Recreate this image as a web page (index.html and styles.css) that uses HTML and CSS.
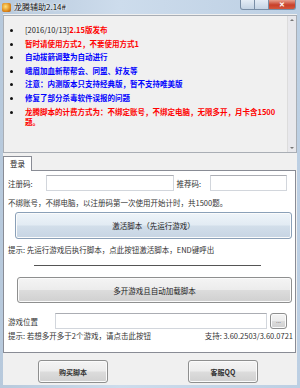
FILE: index.html
```html
<!DOCTYPE html>
<html lang="zh">
<head>
    <meta charset="UTF-8">
    <title>龙腾辅助2.14#</title>
    <link rel="stylesheet" href="styles.css">
</head>
<body>
<div id="window">
    <div id="titlebar">
        <span class="app-icon"></span>
        <span class="title">龙腾辅助2.14#</span>
        <div class="caption">
            <span class="cap-btn min"></span>
            <span class="cap-btn max"></span>
            <span class="cap-btn close">✕</span>
        </div>
    </div>
    <div id="client">
        <div id="news">
            <ul class="news-list">
                <li><span class="plain">[2016/10/13]</span><span class="red">2.15版发布</span></li>
                <li class="red">暂时请使用方式2，不要使用方式1</li>
                <li class="blue">自动拔箭调整为自动进行</li>
                <li class="blue">峨眉加血新帮帮会、同盟、好友等</li>
                <li class="blue">注意：内测版本只支持经典版，暂不支持唯美版</li>
                <li class="blue">修复了部分杀毒软件误报的问题</li>
                <li class="red">龙腾脚本的计费方式为：不绑定账号，不绑定电脑，无限多开，月卡含1500题。</li>
            </ul>
            <div class="scrollbar">
                <span class="arrow up"></span>
                <span class="arrow down"></span>
            </div>
        </div>

        <div id="tabs">
            <span class="tab selected">登录</span>
        </div>
        <div id="panel">
            <div class="row row-code">
                <label class="lbl">注册码:</label>
                <span class="input code"></span>
                <label class="lbl lbl-ref">推荐码:</label>
                <span class="input ref"></span>
            </div>
            <p class="note">不绑账号，不绑电脑，以注册码第一次使用开始计时，共1500题。</p>
            <button class="btn big activate">激活脚本（先运行游戏）</button>
            <p class="hint">提示: 先运行游戏后执行脚本，点此按钮激活脚本，END键呼出</p>
            <div class="sep"></div>
            <button class="btn big multi">多开游戏且自动加载脚本</button>
            <div class="row row-path">
                <label class="lbl">游戏位置</label>
                <span class="input path"></span>
                <button class="btn browse">...</button>
            </div>
            <div class="hint2">
                <span>提示: 若想多开多于2个游戏，请点击此按钮</span>
                <span>支持: 3.60.2503/3.60.0721</span>
            </div>
        </div>

        <div id="footer">
            <button class="btn foot">购买脚本</button>
            <button class="btn foot">客服QQ</button>
        </div>
    </div>
</div>
</body>
</html>
```

FILE: styles.css
```css
*{
    margin: 0;
    padding: 0;
    box-sizing: border-box;
}
ul{
    list-style: none;
}
body{
    width: 300px;
    height: 388px;
    overflow: hidden;
    font-family: "Noto Sans CJK SC", "Noto Sans", sans-serif;
    font-size: 7.5px;
    color: #222;
}

#window{
    width: 300px;
    height: 388px;
    background: linear-gradient(90deg, #b7c9dc, #cddcec 40%, #bccfe3);
    padding: 0 3px 3px;
    display: flex;
    flex-direction: column;
}

#titlebar{
    height: 14px;
    display: flex;
    align-items: center;
    position: relative;
}
.app-icon{
    width: 9px;
    height: 9px;
    margin: 0 3px 0 -1px;
    border-radius: 2px;
    background: radial-gradient(circle at 40% 40%, #ffe27a, #e08a1a 60%, #a4501a);
}
.title{
    font-size: 8px;
    color: #111;
    text-shadow: 0 0 3px #fff, 0 0 2px #fff;
    line-height: 14px;
}
.caption{
    position: absolute;
    right: 1px;
    top: 0;
    display: flex;
}
.cap-btn{
    height: 10px;
    border: 1px solid #7a8ea6;
    border-top: none;
    background: linear-gradient(#e4ecf5, #c4d3e4);
}
.cap-btn.min{
    width: 15px;
    border-radius: 0 0 0 3px;
}
.cap-btn.max{
    width: 14px;
    border-left: none;
}
.cap-btn.close{
    width: 27px;
    border-left: none;
    border-radius: 0 0 3px 0;
    background: linear-gradient(#e7a08f, #c8402a 55%, #d4563c);
    color: #fff;
    font-size: 7px;
    line-height: 9px;
    text-align: center;
    font-weight: bold;
}

#client{
    flex: 1;
    background: #f0f0f0;
    display: flex;
    flex-direction: column;
    padding-top: 1px;
}

#news{
    height: 138px;
    border: 1px solid #a9aeb5;
    display: flex;
    background: #f0f0f0;
}
.news-list{
    flex: 1;
    padding: 9px 6px 0 21px;
    font-weight: bold;
}
.news-list li{
    line-height: 10px;
    margin-bottom: 3.6px;
    position: relative;
}
.news-list li:before{
    content: "";
    position: absolute;
    left: -15px;
    top: 4px;
    width: 3px;
    height: 3px;
    border-radius: 50%;
    background: #111;
}
.plain{
    font-weight: normal;
    color: #222;
}
.red{
    color: #ff0000;
}
.blue{
    color: #0000ff;
}
.scrollbar{
    width: 9px;
    background: #e8e8ec;
    border-left: 1px solid #dcdcdc;
    display: flex;
    flex-direction: column;
    justify-content: space-between;
    padding: 3px 0;
}
.arrow{
    width: 0;
    height: 0;
    margin: 0 auto;
    border-left: 2px solid transparent;
    border-right: 2px solid transparent;
}
.arrow.up{
    border-bottom: 2px solid #777;
}
.arrow.down{
    border-top: 2px solid #777;
}

#tabs{
    height: 16px;
    margin-top: 1px;
    display: flex;
    align-items: flex-end;
}
.tab{
    width: 29px;
    height: 15px;
    border: 1px solid #898c95;
    border-bottom: none;
    background: #fff;
    text-align: center;
    line-height: 14px;
    position: relative;
    top: 1px;
}

#panel{
    height: 183px;
    margin-right: 1px;
    background: #fff;
    border: 1px solid #898c95;
    padding: 4px 8px 0 4px;
    display: flex;
    flex-direction: column;
}
.row{
    height: 16px;
    display: flex;
    align-items: center;
    white-space: nowrap;
}
.row > *{
    flex-shrink: 0;
}
.lbl{
    color: #333;
}
.input{
    height: 16px;
    background: #fff;
    border: 1px solid #d2d6dc;
    border-top-color: #abadb3;
}
.input.code{
    width: 128px;
    margin-left: 13px;
}
.lbl-ref{
    margin-left: 3px;
}
.input.ref{
    width: 77px;
    margin-left: 9px;
}
.note{
    margin-top: 7px;
    line-height: 10px;
    color: #333;
    white-space: nowrap;
}
.btn{
    font-family: "Noto Sans CJK SC", "Noto Sans", sans-serif;
    font-size: 7.5px;
    color: #222;
    border: 1px solid #8e8f8f;
    border-radius: 3px;
    background: linear-gradient(#f4f4f4, #ececec 48%, #dcdcdc 52%, #d0d0d0);
    box-shadow: inset 0 0 0 1px #fbfbfb;
}
.btn.big{
    height: 27px;
    margin-left: 7px;
    width: 277px;
}
.btn.activate{
    margin-top: 4px;
    background: linear-gradient(#eef4f9, #e2ebf3 48%, #d2deea 52%, #c6d4e3);
    border-color: #8aa0b8;
}
.hint{
    margin-top: 6px;
    line-height: 10px;
    color: #333;
    white-space: nowrap;
}
.sep{
    height: 1px;
    margin: 10px 26px 0 26px;
    background: #555;
}
.btn.multi{
    margin-top: 11px;
    height: 26px;
    margin-left: 9px;
    width: 275px;
}
.row-path{
    margin-top: 10px;
}
.input.path{
    width: 212px;
    margin-left: 17px;
}
.btn.browse{
    width: 17px;
    height: 16px;
    margin-left: 3px;
    font-size: 6px;
    line-height: 10px;
    color: #666;
}
.hint2{
    margin-top: 2px;
    line-height: 10px;
    color: #333;
    display: flex;
    justify-content: space-between;
    margin-right: -6px;
    white-space: nowrap;
}

#footer{
    display: flex;
    padding: 7px 0 0 35px;
    gap: 80px;
}
.btn.foot{
    width: 70px;
    height: 23px;
    font-weight: bold;
    font-size: 7px;
    color: #333;
}
```
